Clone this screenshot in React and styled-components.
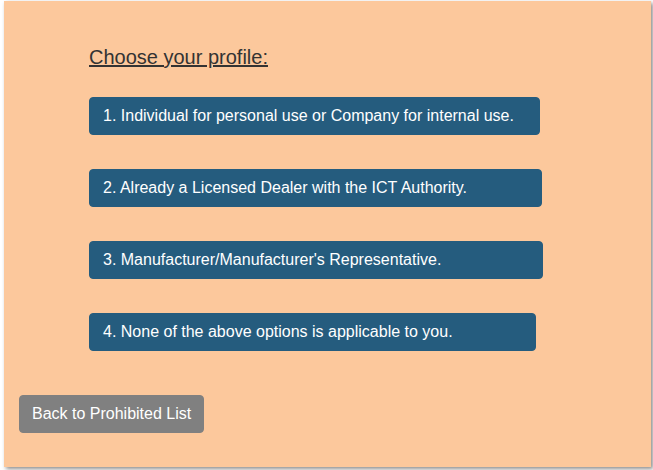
import React from "react";
import styled, { createGlobalStyle } from "styled-components";

const Global = createGlobalStyle`
  html, body { margin: 0; padding: 0; background: #fff; }
  body { font-family: "Liberation Sans", Arial, sans-serif; }
  * { box-sizing: border-box; }
`;

const Page = styled.div`
  padding: 1px 2px 4px 4px;
`;

const Panel = styled.div`
  background: #fcc89c;
  width: 647px;
  height: 466px;
  box-shadow: 2px 2px 4px rgba(0, 0, 0, 0.45);
  padding: 44px 15px 0 15px;
  display: flex;
  flex-direction: column;
`;

const Content = styled.div`
  margin-left: 70px;
  display: flex;
  flex-direction: column;
  align-items: flex-start;
`;

const Heading = styled.h3`
  margin: 0 0 28px 0;
  font-size: 20px;
  font-weight: 400;
  color: #333;
  text-decoration: underline;
  line-height: 24px;
`;

const Option = styled.button`
  width: ${(p) => p.$w}px;
  font-family: inherit;
  font-size: 16px;
  line-height: 24px;
  color: #fff;
  background: #255c7e;
  border: 1px solid #255c7e;
  border-radius: 4px;
  padding: 6px 13px;
  margin-bottom: 34px;
  text-align: left;
  cursor: pointer;
`;

const BackButton = styled.button`
  align-self: flex-start;
  margin-top: 10px;
  font-family: inherit;
  font-size: 16px;
  line-height: 24px;
  color: #fff;
  background: #808080;
  border: 1px solid #808080;
  border-radius: 4px;
  padding: 6px 12px;
  cursor: pointer;
`;

const options = [
  { text: "1. Individual for personal use or Company for internal use.", w: 451 },
  { text: "2. Already a Licensed Dealer with the ICT Authority.", w: 453 },
  { text: "3. Manufacturer/Manufacturer's Representative.", w: 454 },
  { text: "4. None of the above options is applicable to you.", w: 447 },
];

export default function App() {
  return (
    <Page>
      <Global />
      <Panel>
        <Content>
          <Heading>Choose your profile:</Heading>
          {options.map((o) => (
            <Option key={o.text} $w={o.w}>
              {o.text}
            </Option>
          ))}
        </Content>
        <BackButton>Back to Prohibited List</BackButton>
      </Panel>
    </Page>
  );
}
